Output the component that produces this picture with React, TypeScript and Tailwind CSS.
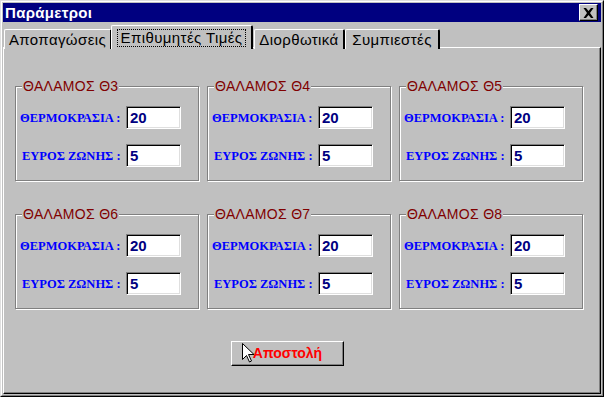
import { FC } from "react"

const groups = ["ΘΑΛΑΜΟΣ Θ3", "ΘΑΛΑΜΟΣ Θ4", "ΘΑΛΑΜΟΣ Θ5", "ΘΑΛΑΜΟΣ Θ6", "ΘΑΛΑΜΟΣ Θ7", "ΘΑΛΑΜΟΣ Θ8"]

const Field: FC<{ label: string; value: string; pl: string }> = ({ label, value, pl }) => {
  return (
    <div className="flex items-center">
      <span className={`w-[110px] ${pl} pt-[2px] text-[12.5px] font-bold text-[#0000ff] font-['Liberation_Serif',serif] whitespace-nowrap`}>{label}</span>
      <div className="w-[55px] h-[23px] bg-white border border-t-[#808080] border-l-[#808080] border-b-white border-r-white shadow-[inset_1px_1px_0_#000,inset_-1px_-1px_0_#dfdfdf] pl-[3px] pt-[2px] text-[15px] font-bold text-[#000080] leading-[18px]">
        {value}
      </div>
    </div>
  )
}

const Group: FC<{ title: string }> = ({ title }) => {
  return (
    <div className="relative h-[95px] border border-[#808080] shadow-[inset_1px_1px_0_#fff,1px_1px_0_#fff] pt-[19px] flex flex-col gap-[15px]">
      <span className="absolute -top-[9px] left-[6px] bg-[#c0c0c0] px-[1px] text-[14px] leading-[16px] text-[#800000] tracking-[0.3px]">{title}</span>
      <Field label="ΘΕΡΜΟΚΡΑΣΙΑ :" value="20" pl="pl-[4px]" />
      <Field label="ΕΥΡΟΣ ΖΩΝΗΣ :" value="5" pl="pl-[6px]" />
    </div>
  )
}

const App: FC = () => {
  return (
    <div className="w-[604px] h-[397px] bg-[#c0c0c0] font-['Liberation_Sans',sans-serif] border border-t-[#dfdfdf] border-l-[#dfdfdf] border-r-black border-b-black overflow-hidden">
      <div className="w-full h-full border border-t-white border-l-white border-r-[#808080] border-b-[#808080] p-[1px] flex flex-col">
        {/* title bar */}
        <div className="h-[19px] bg-[#000080] flex items-center justify-between pl-[2px] pr-[3px]">
          <span className="text-white font-bold text-[15px] leading-none tracking-[0.3px]">Παράμετροι</span>
          <div className="w-[19px] h-[17px] bg-[#c0c0c0] border border-t-white border-l-white border-r-black border-b-black shadow-[inset_-1px_-1px_0_#808080] flex items-center justify-center">
            <svg width="11" height="10" viewBox="0 0 11 10">
              <path d="M0.5 0h2.5l2.5 3 2.5-3h2.5L7 5l3.5 5H8L5.5 7 3 10H0.5L4 5z" fill="#000" />
            </svg>
          </div>
        </div>
        {/* tabs */}
        <div className="flex items-end h-[27px] pl-[1px] pt-[3px] relative z-10 -mb-[2px] text-[15px] leading-[16px] tracking-[0.4px]">
          <div className="w-[108px] h-[20px] bg-[#c0c0c0] border-t border-l border-t-white border-l-white border-r-2 border-r-black rounded-t-[2px] flex items-center justify-center">
            Αποπαγώσεις
          </div>
          <div className="w-[142px] h-[24px] ml-[-1px] mr-[-2px] bg-[#c0c0c0] border-t border-l border-t-white border-l-white border-r-2 border-r-black rounded-t-[2px] flex items-center justify-center">
            <span className="px-[3px] outline-1 outline-dotted outline-black">Επιθυμητές Τιμές</span>
          </div>
          <div className="w-[91px] h-[20px] ml-[3px] bg-[#c0c0c0] border-t border-l border-t-white border-l-white border-r-2 border-r-black rounded-t-[2px] flex items-center justify-center">
            Διορθωτικά
          </div>
          <div className="w-[95px] h-[20px] bg-[#c0c0c0] border-t border-l border-t-white border-l-white border-r-2 border-r-black rounded-t-[2px] flex items-center justify-center">
            Συμπιεστές
          </div>
        </div>
        {/* panel */}
        <div className="flex-1 border border-t-white border-l-white border-r-black border-b-black shadow-[inset_-1px_-1px_0_#808080] pt-[38px] pl-[11px] flex flex-col">
          <div className="grid grid-cols-[184px_184px_184px] gap-x-[8px] gap-y-[33px]">
            {groups.map(g => (
              <Group key={g} title={g} />
            ))}
          </div>
          <div className="pt-[32px] pl-[216px]">
            <div className="relative w-[113px] h-[25px] border border-t-white border-l-white border-r-black border-b-black shadow-[inset_-1px_-1px_0_#808080] flex items-center justify-center text-[14px] font-bold text-[#ff0000]">
              Αποστολή
              <svg className="absolute left-[10px] top-[1px]" width="12" height="20" viewBox="0 0 12 20">
                <path d="M0.5 0.5v16l4-4 3 6.5 2-1-3-6.5h5.5z" fill="#fff" stroke="#000" strokeWidth="1" />
              </svg>
            </div>
          </div>
        </div>
      </div>
    </div>
  )
}
export default App
